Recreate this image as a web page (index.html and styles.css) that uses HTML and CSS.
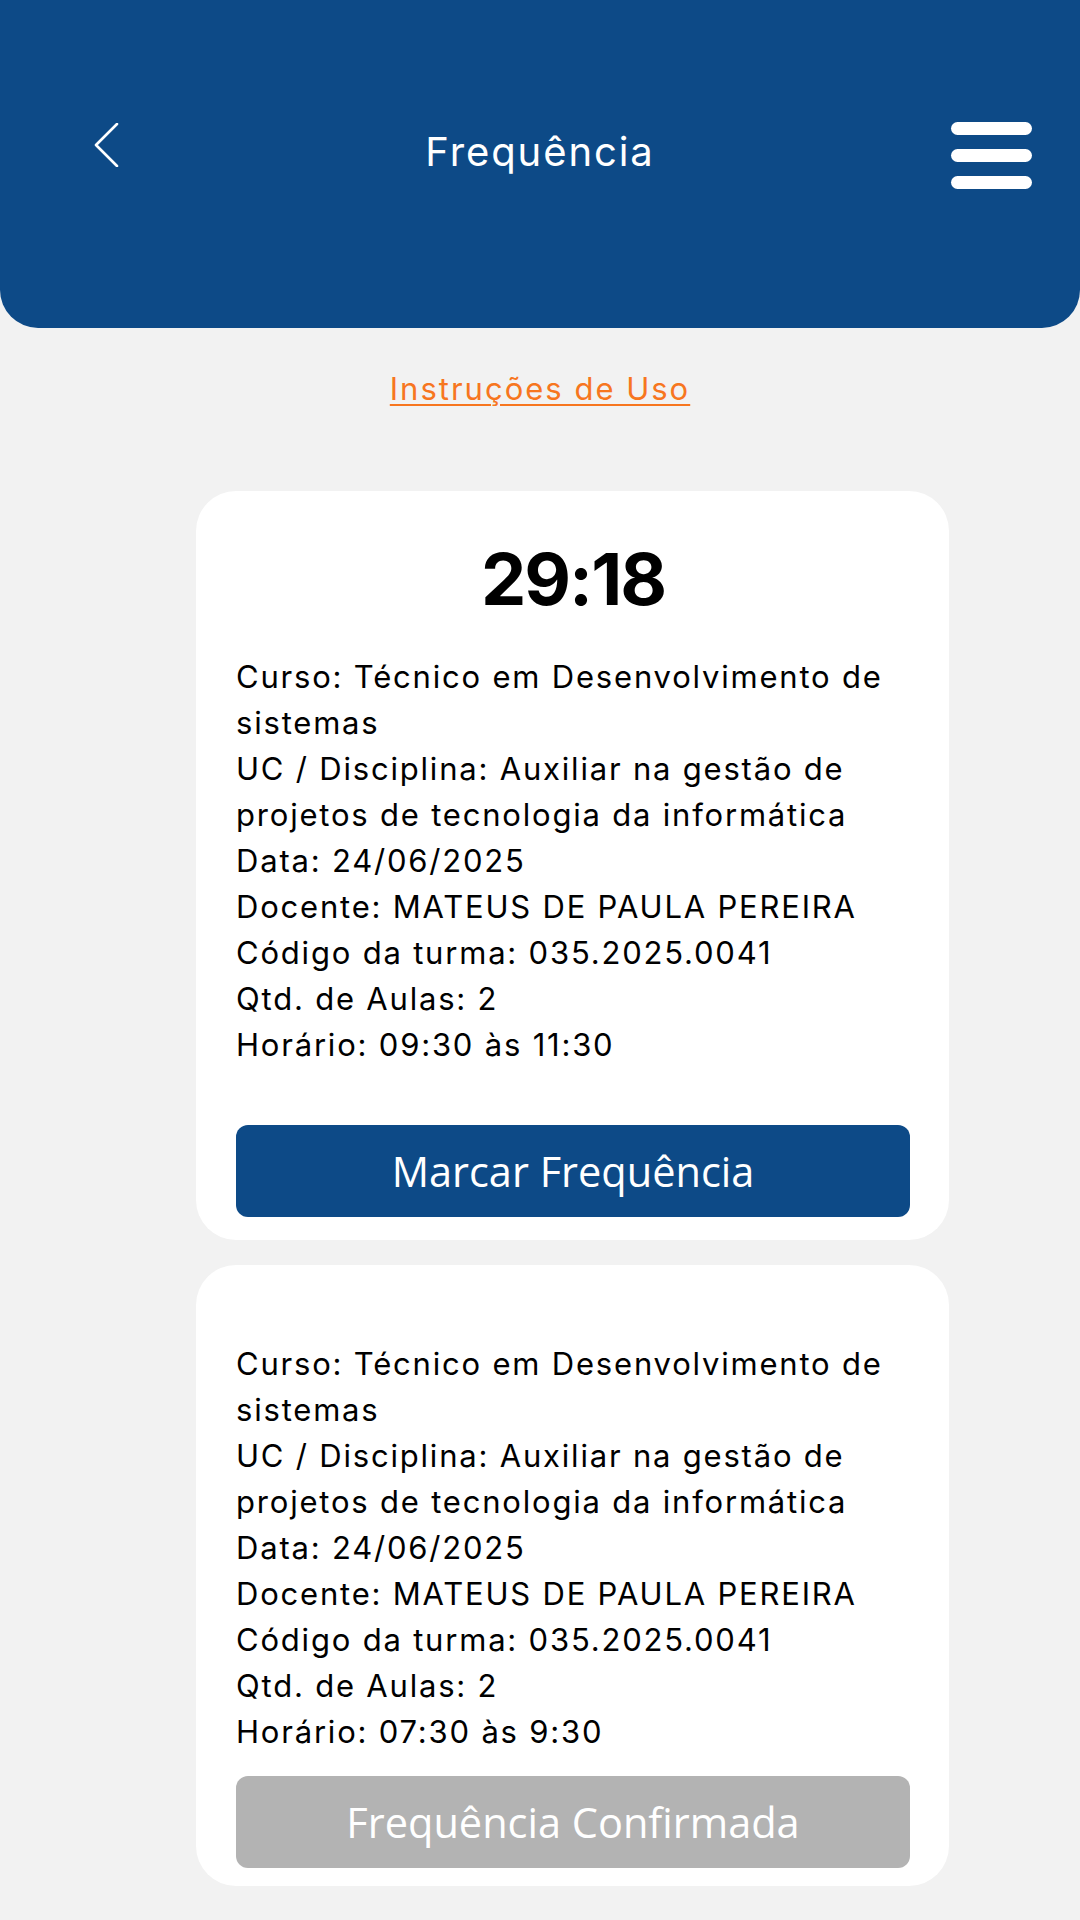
FILE: index.html
```html
<!DOCTYPE html>
<html lang="pt-BR">
<head>
<meta charset="utf-8">
<title>Frequência</title>
<link rel="stylesheet" href="styles.css">
</head>
<body>
<header class="topbar">
  <button class="back" aria-label="Voltar">
    <svg width="26" height="44" viewBox="0 0 26 44"><polyline points="23,1 2,22 23,43" fill="none" stroke="#fff" stroke-width="2.6" stroke-linecap="round" stroke-linejoin="round"/></svg>
  </button>
  <h1 class="title">Frequência</h1>
  <button class="menu" aria-label="Menu">
    <span class="bar"></span><span class="bar"></span><span class="bar"></span>
  </button>
</header>
<main class="content">
  <a class="help" href="#">Instruções de Uso</a>
  <section class="card card-active">
    <div class="timer">29:18</div>
    <div class="info">
      <p>Curso: Técnico em Desenvolvimento de sistemas</p>
      <p>UC / Disciplina: Auxiliar na gestão de projetos de tecnologia da informática</p>
      <p>Data: 24/06/2025</p>
      <p>Docente: MATEUS DE PAULA PEREIRA</p>
      <p>Código da turma: 035.2025.0041</p>
      <p>Qtd. de Aulas: 2</p>
      <p>Horário: 09:30 às 11:30</p>
    </div>
    <button class="btn btn-primary">Marcar Frequência</button>
  </section>
  <section class="card card-done">
    <div class="info">
      <p>Curso: Técnico em Desenvolvimento de sistemas</p>
      <p>UC / Disciplina: Auxiliar na gestão de projetos de tecnologia da informática</p>
      <p>Data: 24/06/2025</p>
      <p>Docente: MATEUS DE PAULA PEREIRA</p>
      <p>Código da turma: 035.2025.0041</p>
      <p>Qtd. de Aulas: 2</p>
      <p>Horário: 07:30 às 9:30</p>
    </div>
    <button class="btn btn-disabled">Frequência Confirmada</button>
  </section>
</main>
</body>
</html>
```
FILE: styles.css
```css
* { box-sizing: border-box; }
html, body { margin: 0; padding: 0; }
body {
  background: #f2f2f2;
  font-family: Inter, "Open Sans", sans-serif;
  color: #000;
  width: 1080px;
  min-height: 1920px;
}
.topbar {
  height: 328px;
  background: #0d4a87;
  border-radius: 0 0 38px 38px;
  display: grid;
  grid-template-columns: 1fr auto 1fr;
  align-items: center;
  align-content: start;
  padding: 112px 48px 0 48px;
}
.back {
  justify-self: start;
  margin-left: 46px;
  margin-top: -14px;
  background: none;
  border: 0;
  padding: 0;
  display: flex;
}
.title {
  margin: 0;
  font-weight: 400;
  font-size: 40px;
  line-height: 80px;
  color: #fff;
  letter-spacing: 1.9px;
}
.menu {
  justify-self: end;
  background: none;
  border: 0;
  padding: 0;
  display: flex;
  flex-direction: column;
  gap: 14px;
  margin-top: 6px;
}
.bar {
  display: block;
  width: 81px;
  height: 13px;
  border-radius: 7px;
  background: #fff;
}
.content {
  display: flex;
  flex-direction: column;
  align-items: flex-start;
}
.help {
  align-self: center;
  margin-top: 38px;
  font-size: 31px;
  line-height: 46px;
  letter-spacing: 2px;
  color: #f7761f;
  text-decoration: underline;
  text-underline-offset: 4px;
  text-decoration-thickness: 2px;
}
.card {
  margin-left: 196px;
  width: 753px;
  background: #fff;
  border-radius: 40px;
  padding: 0 39px 0 40px;
}
.card-active {
  margin-top: 79px;
  padding-top: 48px;
  padding-bottom: 23px;
}
.card-done {
  margin-top: 25px;
  padding-top: 76px;
  padding-bottom: 18px;
}
.timer {
  text-align: center;
  font-weight: 700;
  font-size: 72px;
  line-height: 80px;
  letter-spacing: -2px;
  margin-bottom: 35px;
}
.info p {
  margin: 0;
  font-size: 31px;
  line-height: 46px;
  letter-spacing: 1.8px;
}
.btn {
  display: block;
  width: 100%;
  height: 92px;
  border: 0;
  border-radius: 12px;
  color: #fff;
  font-family: "Open Sans", sans-serif;
  font-size: 41.5px;
  padding: 0;
}
.btn-primary {
  background: #0d4a87;
  margin-top: 57px;
}
.btn-disabled {
  background: #b3b3b3;
  margin-top: 21px;
}
```
